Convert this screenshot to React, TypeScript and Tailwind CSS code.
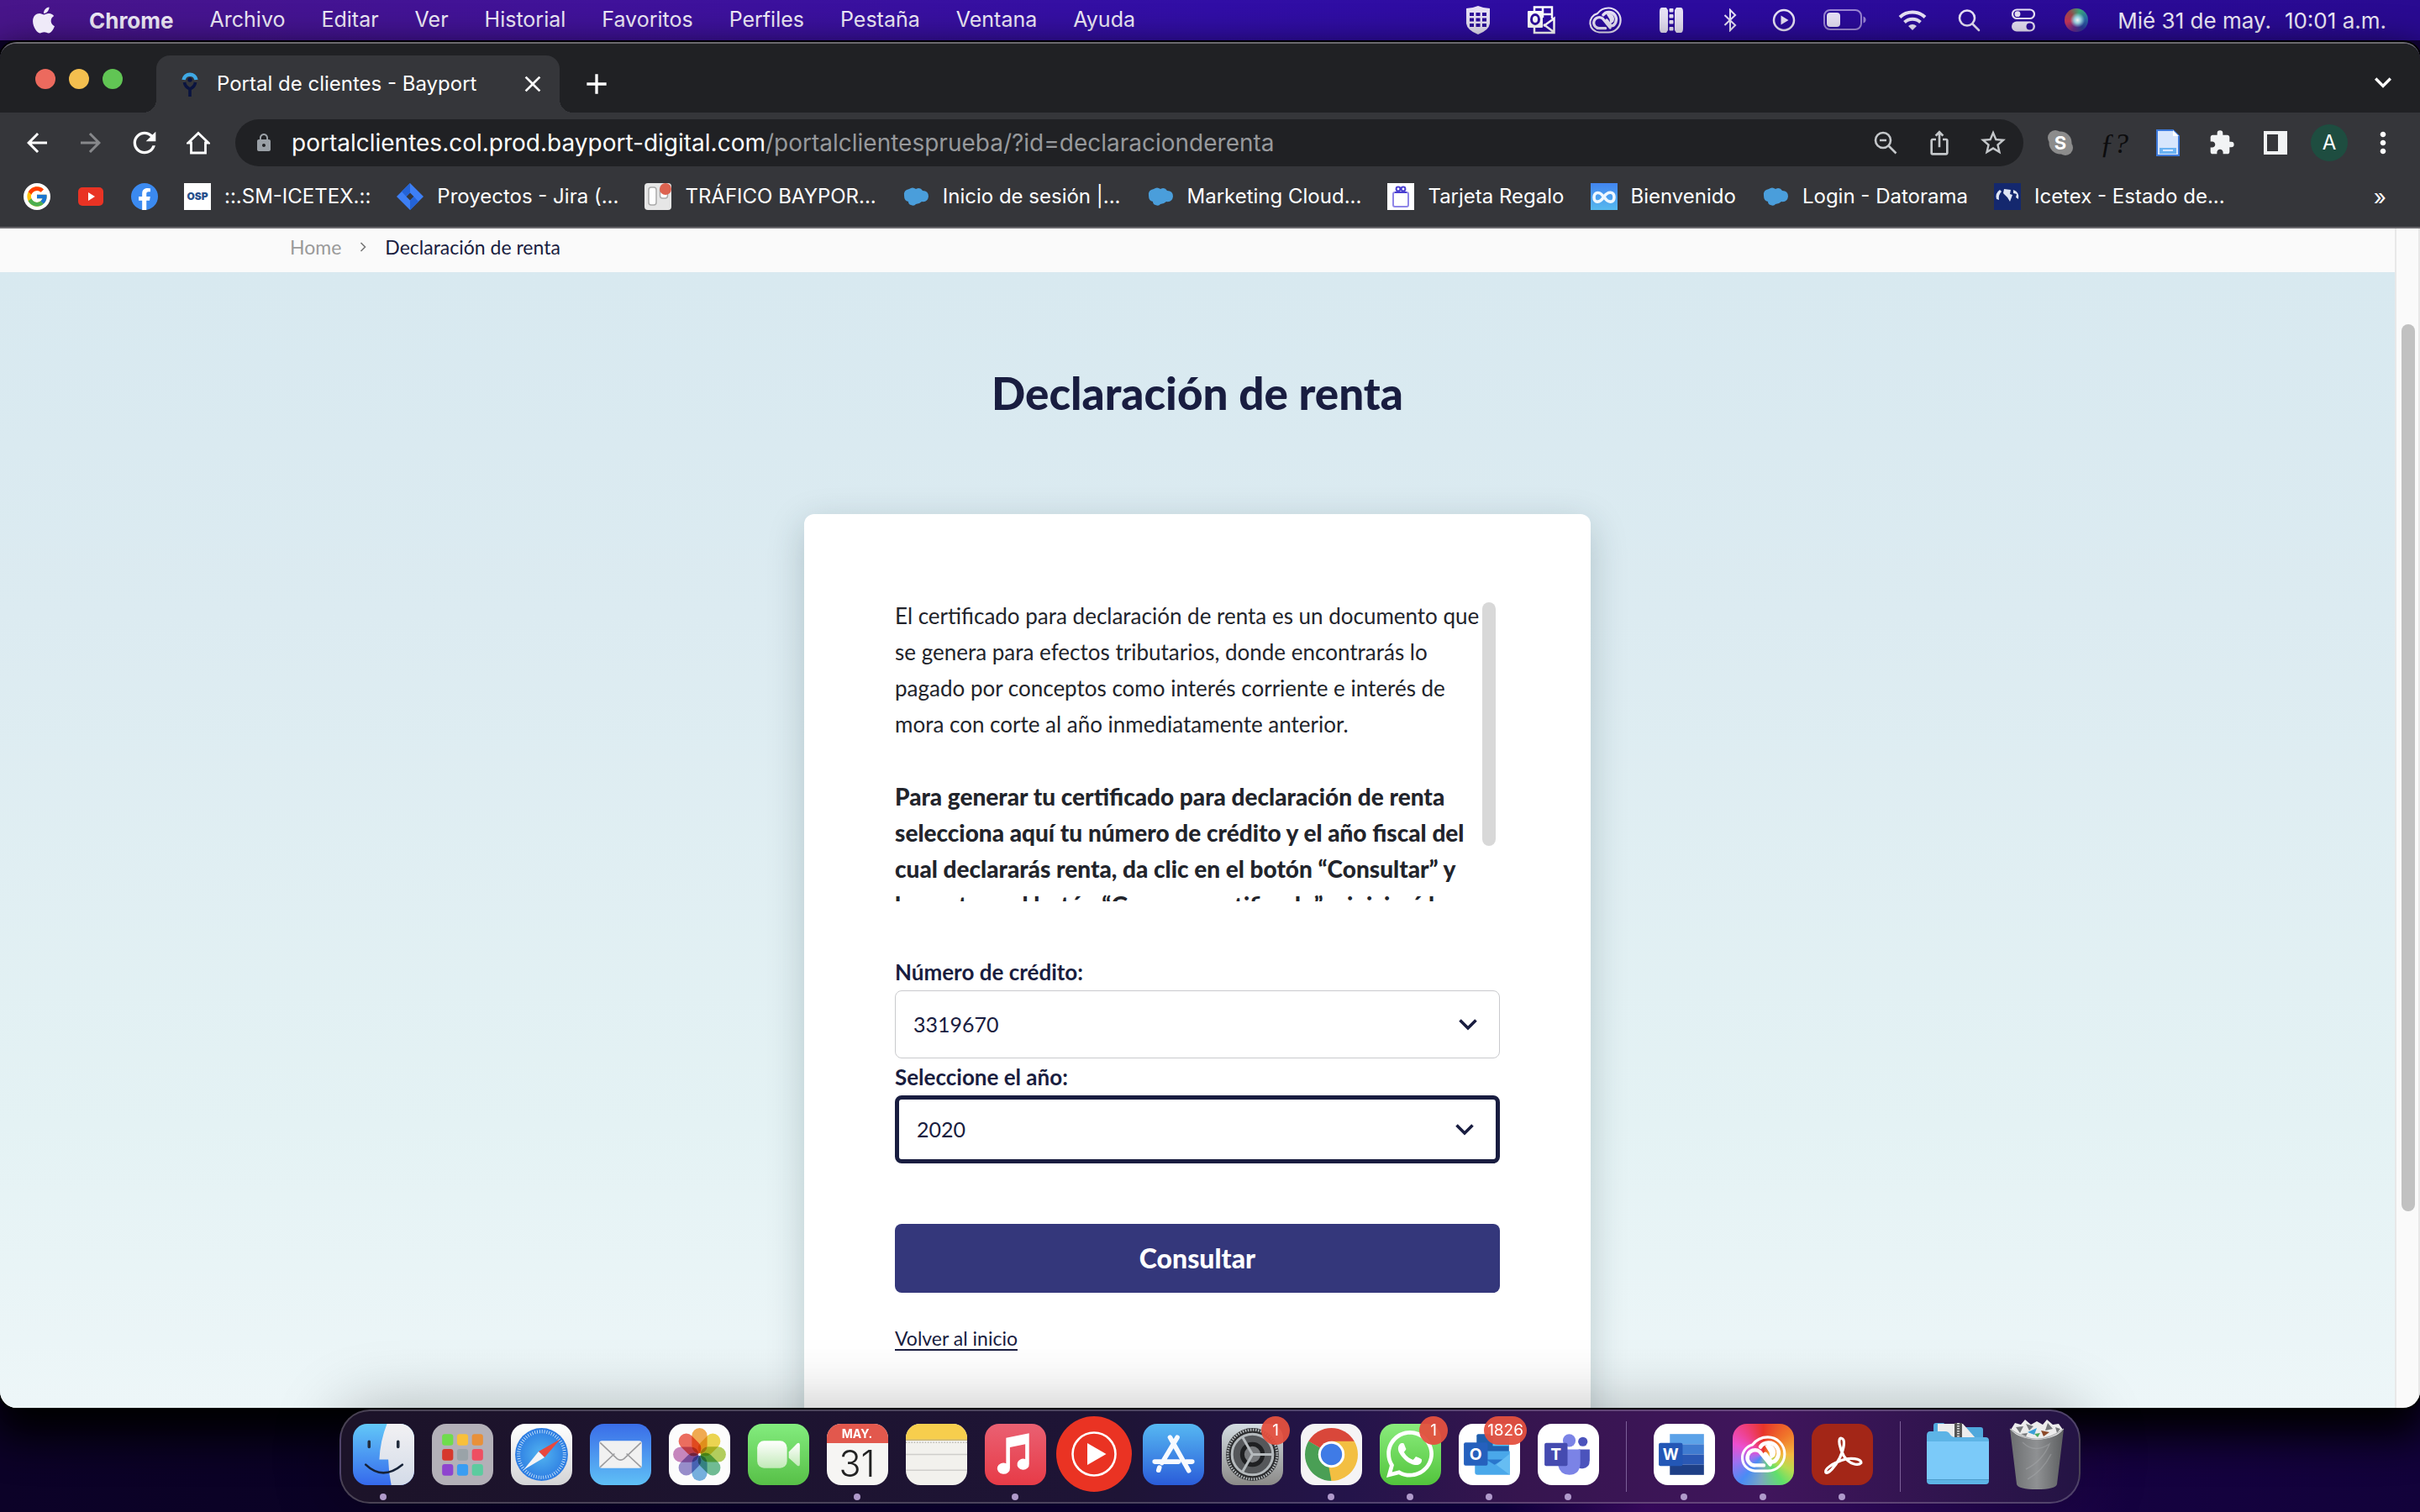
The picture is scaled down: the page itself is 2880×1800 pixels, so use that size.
import React from 'react';
import { FaApple, FaWhatsapp, FaFacebookF } from 'react-icons/fa';
import { FcGoogle } from 'react-icons/fc';
import { MdArrowBack, MdArrowForward, MdRefresh, MdLock, MdIosShare, MdStarBorder, MdExtension, MdMoreVert, MdClose, MdAdd, MdKeyboardArrowDown } from 'react-icons/md';

/* ---------- menu bar ---------- */

const menus = ['Archivo', 'Editar', 'Ver', 'Historial', 'Favoritos', 'Perfiles', 'Pestaña', 'Ventana', 'Ayuda'];

function CloudLoops({ className }: { className?: string }) {
  return (
    <svg viewBox="8 12 58 48" className={className} fill="none" stroke="currentColor" strokeLinecap="round" strokeLinejoin="round">
      <path d="M27 57 A16.500 16.500 0 0 1 24 24.500 C29 18 36 15 43 15 A21 21 0 0 1 43 57 Z" strokeWidth="3.200" />
      <path d="M38 50 H28 A9.500 9.500 0 1 1 33 33 L46 49" strokeWidth="4.600" />
      <path d="M34 27 C38 21 49 20 54 27 C59.500 35 55 45.500 47.500 46 L40 36" strokeWidth="5" />
      <path d="M41 26 C49 23 54 31 51 38 L47 41 L46 34 Z" fill="currentColor" strokeWidth="2" />
    </svg>
  );
}

const statusIcons: { name: string; cell: string; icon: React.ReactNode }[] = [
  {
    name: 'Escudo', cell: 'w-[78px]',
    icon: (
      <svg viewBox="0 0 30 36" className="h-[36px] w-[30px]">
        <path d="M1 4 Q8 4 15 1 Q22 4 29 4 V22 Q28 30 15 35 Q2 30 1 22 Z" fill="#e8e2f6" />
        {[9, 15.5, 22].map((y) => [5, 12.5, 20].map((x) => <rect key={`${x}-${y}`} x={x} y={y} width="5" height="4" fill="#2d0b9b" />))}
      </svg>
    ),
  },
  {
    name: 'Outlook', cell: 'w-[72px]',
    icon: (
      <svg viewBox="0 0 34 34" className="size-[34px]">
        <path d="M9 7 V1.500 H30 V15 M9 26 V32 H32.500 V15 L20 24 M19 2 V14 M19 10 H30 M20 22 L32 31" fill="none" stroke="#fff" strokeWidth="2.500" />
        <rect x="1" y="6" width="18" height="20" rx="1" fill="#fff" />
        <ellipse cx="10" cy="16" rx="4.500" ry="5.500" fill="none" stroke="#2d0b9b" strokeWidth="3" />
      </svg>
    ),
  },
  { name: 'Creative Cloud', cell: 'w-[80px]', icon: <CloudLoops className="h-[34px] w-[40px]" /> },
  {
    name: 'Compresor', cell: 'w-[78px]',
    icon: (
      <svg viewBox="0 0 30 32" className="h-[32px] w-[30px]">
        <path d="M4 1 H9 L11 4 V28 L9 31 H4 Q1 31 1 26 V6 Q1 1 4 1 Z M26 1 H21 L19 4 V28 L21 31 H26 Q29 31 29 26 V6 Q29 1 26 1 Z" fill="#e8e2f6" />
        {[2, 9, 16, 24].map((y) => <rect key={y} x="12.500" y={y} width="5" height="4.500" rx="1" fill="#e8e2f6" />)}
      </svg>
    ),
  },
  { name: 'Bluetooth', cell: 'w-[62px]', icon: <svg viewBox="0 0 20 30" className="h-[28px] w-[20px]" fill="none" stroke="#e8e2f6" strokeWidth="2.200"><path d="M3 8.500 L16.500 21.500 L10 28 V2 L16.500 8.500 L3 21.500" /></svg> },
  {
    name: 'Reproducir', cell: 'w-[66px]',
    icon: (
      <svg viewBox="0 0 28 28" className="size-[28px]">
        <circle cx="14" cy="14" r="12" fill="none" stroke="#e8e2f6" strokeWidth="2.500" />
        <path d="M10.500 8.500 V19.500 L19.500 14 Z" fill="#e8e2f6" />
      </svg>
    ),
  },
  {
    name: 'Batería', cell: 'w-[80px]',
    icon: (
      <svg viewBox="0 0 52 26" className="h-[26px] w-[52px]">
        <rect x="1" y="1" width="44" height="23" rx="7" fill="none" stroke="#9a85d4" strokeWidth="2" />
        <rect x="4" y="4" width="16" height="17" rx="4" fill="#e8e2f6" />
        <path d="M47.500 8.500 Q50.500 9.500 50.500 12.500 Q50.500 15.500 47.500 16.500 Z" fill="#9a85d4" />
      </svg>
    ),
  },
  {
    name: 'Wi-Fi', cell: 'w-[80px]',
    icon: (
      <svg viewBox="0 0 34 26" className="h-[26px] w-[34px]" fill="none" stroke="#e8e2f6" strokeWidth="4">
        <path d="M2 9.500 A22 22 0 0 1 32 9.500" />
        <path d="M7.500 15.500 A14 14 0 0 1 26.500 15.500" />
        <path d="M17 25 L12 20 A7.500 7.500 0 0 1 22 20 Z" fill="#e8e2f6" stroke="none" />
      </svg>
    ),
  },
  { name: 'Buscar', cell: 'w-[54px]', icon: <svg viewBox="0 0 28 28" className="size-[28px]" fill="none" stroke="#e8e2f6" strokeWidth="2.600" strokeLinecap="round"><circle cx="12" cy="11.500" r="9" /><path d="M18.500 18.500 L26 26" /></svg> },
  {
    name: 'Centro de control', cell: 'w-[76px]',
    icon: (
      <svg viewBox="0 0 28 28" className="size-[28px]">
        <rect x="1" y="1.500" width="26" height="10.500" rx="5.250" fill="none" stroke="#e8e2f6" strokeWidth="2.200" />
        <circle cx="7" cy="6.700" r="3.400" fill="#e8e2f6" />
        <rect x="0" y="15.500" width="28" height="12" rx="6" fill="#e8e2f6" />
        <circle cx="21.500" cy="21.500" r="4" fill="#2d0b9b" />
      </svg>
    ),
  },
  {
    name: 'Siri', cell: 'w-[50px]',
    icon: <span className="block size-7 rounded-full bg-[radial-gradient(circle_at_55%_50%,#fff_0%,#9fd8e8_18%,transparent_42%),conic-gradient(from_20deg,#3aa57a,#2a6ea8,#2a3a9a,#6a2a8a,#c8365a,#9a4a4a,#3aa57a)]" />,
  },
];

function MenuBar() {
  return (
    <header className="flex h-12 shrink-0 items-center bg-[linear-gradient(90deg,#48158a_0%,#40129a_25%,#310ea6_50%,#2c0b9e_70%,#290a91_100%)] text-[25px] text-[#efeaf8]">
      <button aria-label="Menú Apple" className="ml-[39px] mr-[41px]"><FaApple className="h-8 w-[26px] scale-110" /></button>
      <nav className="flex gap-[43px]">
        <button className="text-[26px] font-bold">Chrome</button>
        {menus.map((m) => <button key={m}>{m}</button>)}
      </nav>
      <div className="ml-auto flex items-center">
        {statusIcons.map((s) => (
          <button key={s.name} aria-label={s.name} className={`flex items-center justify-center text-[#e8e2f6] ${s.cell}`}>{s.icon}</button>
        ))}
      </div>
      <time className="ml-6 mr-10 flex gap-4 text-[26px]"><span>Mié 31 de may.</span><span>10:01 a.m.</span></time>
    </header>
  );
}

/* ---------- browser chrome ---------- */

function TabStrip() {
  return (
    <div className="flex h-[82px] items-end bg-[#202124] text-white">
      <div className="mb-7 ml-[42px] flex gap-4">
        <button aria-label="Cerrar ventana" className="size-6 rounded-full bg-[#ec6a5e]" />
        <button aria-label="Minimizar" className="size-6 rounded-full bg-[#f4bf4f]" />
        <button aria-label="Ampliar" className="size-6 rounded-full bg-[#61c554]" />
      </div>
      <div className="relative ml-10 flex h-[68px] w-[480px] items-center rounded-t-[16px] bg-[#35363a] pl-6 pr-4 before:absolute before:-left-4 before:bottom-0 before:size-4 before:bg-[radial-gradient(circle_at_0_0,transparent_16px,#35363a_16px)] after:absolute after:-right-4 after:bottom-0 after:size-4 after:bg-[radial-gradient(circle_at_100%_0,transparent_16px,#35363a_16px)]">
        <svg viewBox="0 0 32 32" className="size-8" fill="none">
          <path d="M8.500 11 A7.600 7.600 0 0 1 23.500 11" stroke="#3fa9e5" strokeWidth="4.500" />
          <circle cx="16" cy="11" r="2.700" fill="#0a1440" />
          <path d="M9.500 14 Q10 19 16 22 Q22 19 22.500 14 M16 21 V31" stroke="#0a1440" strokeWidth="3.600" />
        </svg>
        <span className="ml-4 text-[24px]">Portal de clientes - Bayport</span>
        <button aria-label="Cerrar pestaña" className="ml-auto"><MdClose className="size-8" /></button>
      </div>
      <button aria-label="Nueva pestaña" className="mb-[14px] ml-6"><MdAdd className="size-10" /></button>
      <button aria-label="Buscar pestañas" className="mb-4 ml-auto mr-6"><MdKeyboardArrowDown className="size-10" /></button>
    </div>
  );
}

const cell = 'flex w-16 items-center justify-center';

function Toolbar() {
  return (
    <div className="flex h-[72px] items-center bg-[#35363a] px-3 text-white">
      <button aria-label="Atrás" className={cell}><MdArrowBack className="size-9" /></button>
      <button aria-label="Adelante" className={`${cell} text-[#87888b]`}><MdArrowForward className="size-9" /></button>
      <button aria-label="Recargar" className={cell}><MdRefresh className="size-10" /></button>
      <button aria-label="Inicio" className={cell}>
        <svg viewBox="0 0 28 28" className="size-7" fill="none" stroke="currentColor" strokeWidth="2.800"><path d="M2 14 L14 2.500 L26 14 H22.500 V26 H5.500 V14 Z" /></svg>
      </button>
      <div className="mx-3 flex h-14 min-w-0 flex-1 items-center rounded-full bg-[#202124] pl-[22px] pr-1 text-[28px]">
        <MdLock className="size-6 shrink-0 text-[#9aa0a6]" />
        <div role="textbox" aria-label="Dirección" className="ml-[21px] flex-1 truncate text-[#97999c]">
          <span className="text-white">portalclientes.col.prod.bayport-digital.com</span>/portalclientesprueba/?id=declaracionderenta
        </div>
        <button aria-label="Reducir" className={`${cell} text-[#c4c7ca]`}>
          <svg viewBox="0 0 28 28" className="size-7" fill="none" stroke="currentColor" strokeWidth="2.600"><circle cx="11" cy="11" r="9" /><path d="M7 11 H15 M17.500 17.500 L26.500 26.500" /></svg>
        </button>
        <button aria-label="Compartir" className={`${cell} text-[#c4c7ca]`}><MdIosShare className="size-8" /></button>
        <button aria-label="Guardar en favoritos" className={`${cell} text-[#c4c7ca]`}><MdStarBorder className="size-9" /></button>
      </div>
      <button aria-label="Skype" className={cell}>
        <svg viewBox="0 0 32 32" className="size-8">
          <circle cx="10" cy="10" r="9" fill="#8c8c8c" /><circle cx="22" cy="22" r="9" fill="#8c8c8c" /><circle cx="16" cy="16" r="13.500" fill="#8c8c8c" />
          <text x="16" y="24" textAnchor="middle" fontSize="22" fontWeight="700" fill="#fff">S</text>
        </svg>
      </button>
      <button aria-label="Tipografía" className={`${cell} font-[family-name:Liberation_Serif,serif] text-[34px] italic text-[#0c0c0d]`}>ƒ?</button>
      <button aria-label="Documentos" className={cell}>
        <svg viewBox="0 0 28 32" className="h-8 w-7">
          <path d="M1 1 H20 L27 8 V31 H1 Z" fill="#d7e6fd" stroke="#3c78d8" strokeWidth="2" />
          <path d="M20 1 L27 8 H20 Z" fill="#fff" />
          <rect x="4" y="22" width="20" height="7" fill="#6ab2f2" />
          <rect x="8" y="24" width="12" height="2" fill="#d7e6fd" />
        </svg>
      </button>
      <button aria-label="Extensiones" className={`${cell} text-[#f1f3f4]`}><MdExtension className="size-8" /></button>
      <button aria-label="Panel lateral" className={cell}>
        <svg viewBox="0 0 28 28" className="size-7"><path fillRule="evenodd" d="M0 0 H28 V28 H0 Z M4 4 V24 H17 V4 Z" fill="#f1f3f4" /></svg>
      </button>
      <button aria-label="Perfil" className={cell}>
        <span className="flex size-11 items-center justify-center rounded-full bg-[#1e4d40] text-[24px]">A</span>
      </button>
      <button aria-label="Más opciones" className={cell}><MdMoreVert className="size-10" /></button>
    </div>
  );
}

function SalesCloud() {
  return (
    <svg viewBox="0 0 32 32" className="size-8 shrink-0">
      <path d="M2 15 Q1 8 8 7 Q12 4 16 7 Q21 4 24 9 Q31 9 31 16 Q30 23 23 22 Q20 25 16 25 Q14 28 10 26 Q7 25 7 22 Q2 21 2 15 Z" fill="#4a9edb" />
    </svg>
  );
}

const bookmarks: { label: string; icon: React.ReactNode }[] = [
  {
    label: '::.SM-ICETEX.::',
    icon: <span className="flex size-8 shrink-0 items-center justify-center bg-white text-[12px] font-black text-[#27508c]">OSP</span>,
  },
  {
    label: 'Proyectos - Jira (...',
    icon: (
      <svg viewBox="0 0 32 32" className="size-8 shrink-0">
        <path d="M16 0 L32 16 L16 32 L0 16 Z M16 11.500 L11.500 16 L16 20.500 L20.500 16 Z" fill="#3d7ff5" fillRule="evenodd" />
        <path d="M16 0 L16 11.500 L11.500 16 L6 10 Z M16 32 L16 20.500 L20.500 16 L26 22 Z" fill="#2463d6" />
      </svg>
    ),
  },
  {
    label: 'TRÁFICO BAYPOR...',
    icon: (
      <svg viewBox="0 0 32 32" className="size-8 shrink-0">
        <rect width="32" height="32" rx="4" fill="#e6e6e6" />
        <rect x="5" y="5" width="9" height="21" rx="3" fill="#fff" stroke="#aaa" strokeWidth="1.500" />
        <rect x="18.500" y="5" width="9" height="13" rx="3" fill="#fff" stroke="#aaa" strokeWidth="1.500" />
        <circle cx="25" cy="7" r="7" fill="#dd6350" />
      </svg>
    ),
  },
  { label: 'Inicio de sesión |...', icon: <SalesCloud /> },
  { label: 'Marketing Cloud...', icon: <SalesCloud /> },
  {
    label: 'Tarjeta Regalo',
    icon: (
      <svg viewBox="0 0 32 32" className="size-8 shrink-0">
        <rect width="32" height="32" fill="#fff" />
        <rect x="7" y="11" width="18" height="17" rx="2" fill="#fff" stroke="#8f86e8" strokeWidth="2" />
        <path d="M9 10 H23 V12 H9 Z" fill="#4a3fd0" />
        <circle cx="13" cy="7" r="2.400" fill="none" stroke="#4a3fd0" strokeWidth="2" />
        <circle cx="19" cy="7" r="2.400" fill="none" stroke="#4a3fd0" strokeWidth="2" />
      </svg>
    ),
  },
  {
    label: 'Bienvenido',
    icon: (
      <svg viewBox="0 0 32 32" className="size-8 shrink-0">
        <defs><linearGradient id="bv" x2="0" y2="1"><stop stopColor="#4285f0" /><stop offset="1" stopColor="#56b9ee" /></linearGradient></defs>
        <rect width="32" height="32" fill="url(#bv)" />
        <path d="M16 18 C12 9 4 10 4 17 C4 24 11 24 16 16 C21 9 28 10 28 17 C28 24 20 24 16 16" fill="none" stroke="#eef7ff" strokeWidth="3.600" />
      </svg>
    ),
  },
  { label: 'Login - Datorama', icon: <SalesCloud /> },
  {
    label: 'Icetex - Estado de...',
    icon: (
      <svg viewBox="0 0 32 32" className="size-8 shrink-0">
        <rect width="32" height="32" fill="#14286e" />
        <path d="M3 19 Q1 12 7 8 L9 10 Q5 14 6 20 Z M12 7 L20 8 L19 13 L22 14 L19 22 L16 17 L11 12 Z M23 8 Q31 11 29 19 L26 17 L27 13 L23 12 Z" fill="#dfe6f4" />
      </svg>
    ),
  },
];

function BookmarksBar() {
  return (
    <nav className="flex h-[66px] items-center gap-[31px] border-b-2 border-[#6a696d] bg-[#35363a] pb-2 pl-[28px] pr-10 text-[24px] text-white">
      <div className="flex gap-8">
        <a href="#google" aria-label="Google" className="flex size-8 shrink-0 items-center justify-center rounded-full bg-white"><FcGoogle className="size-7" /></a>
        <a href="#youtube" aria-label="YouTube" className="flex size-8 shrink-0 items-center justify-center">
          <svg viewBox="0 0 30 22" className="h-[22px] w-[30px]"><rect width="30" height="22" rx="5" fill="#e93324" /><path d="M12 6 V16 L20 11 Z" fill="#fff" /></svg>
        </a>
        <a href="#facebook" aria-label="Facebook" className="flex size-8 shrink-0 items-end justify-center rounded-full bg-[#3b8af0] text-white"><FaFacebookF className="h-[26px] w-5" /></a>
      </div>
      {bookmarks.map((b) => (
        <a key={b.label} href="#marcador" className="flex items-center gap-4 whitespace-nowrap">{b.icon}{b.label}</a>
      ))}
      <button aria-label="Más marcadores" className="ml-auto text-[26px]">»</button>
    </nav>
  );
}

/* ---------- page ---------- */

function SelectField({ id, label, value, focused }: { id: string; label: string; value: string; focused?: boolean }) {
  return (
    <div>
      <label htmlFor={id} className="block text-[26px] font-bold leading-[44px] text-[#191d40]">{label}</label>
      <div className="relative">
        <select
          id={id}
          defaultValue={value}
          className={`h-[81px] w-full appearance-none rounded-lg bg-white pl-[21px] text-[25px] text-[#191d40] outline-none ${focused ? 'border-[5px] border-[#191d40]' : 'border border-[#c9cacd]'}`}
        >
          <option>{value}</option>
        </select>
        <svg viewBox="0 0 22 14" className={`pointer-events-none absolute top-[34px] h-[14px] w-[22px] ${focused ? 'right-[31px]' : 'right-[27px]'}`} fill="none" stroke="#191d40" strokeWidth="3.600">
          <path d="M1.500 1.500 L11 11 L20.500 1.500" />
        </svg>
      </div>
    </div>
  );
}

function Portal() {
  return (
    <div className="flex min-h-0 flex-1 overflow-hidden rounded-b-[20px] bg-[#fafafa] font-[family-name:Lato,sans-serif]">
      <div className="flex min-w-0 flex-1 flex-col">
        <nav aria-label="Ruta" className="flex h-[52px] shrink-0 items-center gap-[22px] pb-2 pl-[345px] text-[23px] text-[#191d40]">
          <a href="#home" className="text-[#9a9a9a]">Home</a>
          <svg viewBox="0 0 8 12" className="h-3 w-2" fill="none" stroke="#777" strokeWidth="1.600"><path d="M1.500 1 L6.500 6 L1.500 11" /></svg>
          <span>Declaración de renta</span>
        </nav>
        <main className="flex min-h-0 flex-1 flex-col items-center overflow-hidden bg-[linear-gradient(180deg,#d8e9f0_0%,#dcebf1_30%,#e4f2f4_75%,#edf6f8_100%)]">
          <h1 className="mt-[112px] text-[53px] font-black leading-[64px] text-[#191d40]">Declaración de renta</h1>
          <section className="mt-[112px] w-[936px] shrink-0 rounded-xl bg-white px-[108px] pb-32 pt-[100px] shadow-[0_12px_44px_rgba(20,50,60,0.22)]">
            <div className="flex h-[361px] overflow-hidden">
              <div className="min-w-0 flex-1 text-[26px] leading-[43px] text-[#22242b]">
                <p>El certificado para declaración de renta es un documento que se genera para efectos tributarios, donde encontrarás lo pagado por conceptos como interés corriente e interés de mora con corte al año inmediatamente anterior.</p>
                <p className="mt-[43px] text-[28px] font-black">Para generar tu certificado para declaración de renta selecciona aquí tu número de crédito y el año fiscal del cual declararás renta, da clic en el botón “Consultar” y luego toca el botón “Generar certificado” e iniciará la descarga.</p>
              </div>
              <div className="mr-[5px] mt-[5px] h-[290px] w-4 shrink-0 rounded-full bg-[#d8d8d8]" />
            </div>
            <form className="mt-[62px]" onSubmit={(e) => e.preventDefault()}>
              <SelectField id="credito" label="Número de crédito:" value="3319670" />
              <SelectField id="anio" label="Seleccione el año:" value="2020" focused />
              <button type="submit" className="mt-[72px] h-[82px] w-full rounded-lg bg-[#34377b] text-[32px] font-black text-white">Consultar</button>
            </form>
            <a href="#inicio" className="mt-9 inline-block text-[23px] leading-9 text-[#191d40] underline decoration-2 underline-offset-4">Volver al inicio</a>
          </section>
        </main>
      </div>
      <div className="w-[30px] shrink-0 border-l-2 border-r-2 border-[#e8e8e8] pl-1.5 pt-[114px]">
        <div className="h-[1056px] w-4 rounded-full bg-[#c1c1c1]" />
      </div>
    </div>
  );
}

/* ---------- dock ---------- */

const tile = 'h-[73px] w-[73px] shrink-0 overflow-hidden rounded-[17px]';

const FinderIcon = (
  <svg viewBox="0 0 72 72" className={tile}>
    <defs>
      <linearGradient id="fi" x2="0" y2="1"><stop stopColor="#62c8f8" /><stop offset="1" stopColor="#3569ec" /></linearGradient>
      <linearGradient id="fj" x2="0" y2="1"><stop stopColor="#f2f1f3" /><stop offset="1" stopColor="#d3dbe8" /></linearGradient>
    </defs>
    <rect width="72" height="72" fill="url(#fi)" />
    <path d="M40 0 Q32 20 31 42 H41.500 Q42 58 45 72 H72 V0 Z" fill="url(#fj)" />
    <path d="M19 21 V27 M53 21 V27" stroke="#222d3d" strokeWidth="3.500" strokeLinecap="round" />
    <path d="M15 48 Q35 67 58 48" fill="none" stroke="#162238" strokeWidth="2.600" strokeLinecap="round" />
  </svg>
);

const launchColors = ['#6fdc4c', '#f8c03a', '#e8903a', '#d6382c', '#9aa3a8', '#ee4f62', '#8e44cf', '#3a9df2', '#5ccb9f'];
const LaunchpadIcon = (
  <svg viewBox="0 0 72 72" className={tile}>
    <rect width="72" height="72" fill="#b3b0b8" />
    {launchColors.map((c, i) => <rect key={c} x={12 + (i % 3) * 17.5} y={12 + Math.floor(i / 3) * 17.7} width="13" height="13.500" rx="3" fill={c} />)}
  </svg>
);

const SafariIcon = (
  <svg viewBox="0 0 72 72" className={tile}>
    <defs>
      <linearGradient id="sa" x2="0" y2="1"><stop stopColor="#fff" /><stop offset="1" stopColor="#d4d4d6" /></linearGradient>
      <radialGradient id="sb"><stop stopColor="#52b4f0" /><stop offset="1" stopColor="#2c7be2" /></radialGradient>
    </defs>
    <rect width="72" height="72" fill="url(#sa)" />
    <circle cx="36" cy="36" r="31" fill="url(#sb)" />
    <circle cx="36" cy="36" r="27" fill="none" stroke="#d8ecfb" strokeWidth="4" strokeDasharray="0.8 2.030" />
    <path d="M58 18 L32.500 32.500 L39.500 39.500 Z" fill="#e8483e" />
    <path d="M15 54 L32.500 32.500 L39.500 39.500 Z" fill="#f4f4f6" />
  </svg>
);

const MailIcon = (
  <svg viewBox="0 0 72 72" className={tile}>
    <defs><linearGradient id="ma" x2="0" y2="1"><stop stopColor="#3a6de8" /><stop offset="1" stopColor="#5fc0f6" /></linearGradient></defs>
    <rect width="72" height="72" fill="url(#ma)" />
    <rect x="11" y="20" width="50" height="32" rx="3" fill="#f1f1f1" />
    <path d="M12 51 L29 35 M60 51 L43 35 M12 22 L32 41 Q36 44 40 41 L60 22" fill="none" stroke="#9c9c9e" strokeWidth="1.600" />
  </svg>
);

const petals = ['#f2a13a', '#ecd23a', '#aaca48', '#5db486', '#64a6dc', '#8b7fc6', '#c277b6', '#ec5a4a'];
const PhotosIcon = (
  <svg viewBox="0 0 72 72" className={tile}>
    <rect width="72" height="72" fill="#fcfcfc" />
    <g className="mix-blend-multiply">
      {petals.map((c, i) => <rect key={c} x="27" y="5" width="18" height="30" rx="9" fill={c} opacity="0.880" transform={`rotate(${i * 45} 36 36)`} className="mix-blend-multiply" />)}
    </g>
    <circle cx="36" cy="36" r="1.500" fill="#fff" />
  </svg>
);

const FaceTimeIcon = (
  <svg viewBox="0 0 72 72" className={tile}>
    <defs>
      <linearGradient id="ft" x2="0" y2="1"><stop stopColor="#83ec7e" /><stop offset="1" stopColor="#57c047" /></linearGradient>
      <linearGradient id="fu" x2="0" y2="1"><stop stopColor="#fff" /><stop offset="1" stopColor="#c2eab8" /></linearGradient>
    </defs>
    <rect width="72" height="72" fill="url(#ft)" />
    <rect x="11" y="20" width="35" height="32" rx="8" fill="url(#fu)" />
    <path d="M48 33 L58 23 Q61 21 61 25 V47 Q61 51 58 49 L48 40 Z" fill="url(#fu)" />
  </svg>
);

const CalendarIcon = (
  <span className={`${tile} flex flex-col items-center bg-[#f6f5f3]`}>
    <span className="flex h-[23px] w-full items-center justify-center bg-[#e2584d] text-[14px] font-bold text-white">MAY.</span>
    <span className="text-[43px] font-light leading-[48px] text-[#222]">31</span>
  </span>
);

const NotesIcon = (
  <svg viewBox="0 0 72 72" className={tile}>
    <rect width="72" height="72" fill="#f2f1ed" />
    <rect width="72" height="18.500" fill="#f7ce4d" />
    <path d="M0 19 H72" stroke="#b59a45" strokeWidth="1" />
    <path d="M0 22 H72" stroke="#b9b8b4" strokeWidth="1.400" strokeDasharray="1.400 1.800" />
    <path d="M0 36 H72 M0 54.500 H72" stroke="#cfcecb" strokeWidth="1.400" />
  </svg>
);

const MusicIcon = (
  <svg viewBox="0 0 72 72" className={tile}>
    <defs><linearGradient id="mu" x2="0" y2="1"><stop stopColor="#ea6072" /><stop offset="1" stopColor="#e73b47" /></linearGradient></defs>
    <rect width="72" height="72" fill="url(#mu)" />
    <path d="M25 16.500 L52 11 V47 A7 6.500 0 1 1 47.500 41.500 V24 L29.500 27.500 V52 A7.500 6.500 0 1 1 25 46.500 Z" fill="#fff" />
  </svg>
);

const PlayIcon = (
  <svg viewBox="0 0 90 90" className="size-[90px] shrink-0">
    <circle cx="45" cy="45" r="45" fill="#ea3323" />
    <circle cx="45" cy="45" r="25.500" fill="none" stroke="#fff" strokeWidth="2.600" />
    <path d="M37 32 V58 L59.500 45 Z" fill="#fff" />
  </svg>
);

const AppStoreIcon = (
  <svg viewBox="0 0 72 72" className={tile}>
    <defs><linearGradient id="as" x2="0" y2="1"><stop stopColor="#56b8f2" /><stop offset="1" stopColor="#2a5cd9" /></linearGradient></defs>
    <rect width="72" height="72" fill="url(#as)" />
    <g stroke="#f7faff" strokeWidth="5.500" strokeLinecap="round">
      <path d="M40.500 16 L22.500 46 M19.500 51.500 L18.500 54.500 M32 16 L54 55 M14 44.500 H42 M51 44.500 H58" />
    </g>
  </svg>
);

const SettingsIcon = (
  <svg viewBox="0 0 72 72" className={tile}>
    <defs><linearGradient id="se" x2="0" y2="1"><stop stopColor="#d3dce2" /><stop offset="1" stopColor="#8b8a88" /></linearGradient></defs>
    <rect width="72" height="72" fill="url(#se)" />
    <circle cx="36" cy="36" r="31" fill="#2b2c2e" />
    <circle cx="36" cy="36" r="29" fill="none" stroke="#b5babd" strokeWidth="3" strokeDasharray="1.600 1.440" />
    <circle cx="36" cy="36" r="24" fill="#55575a" stroke="#b5babd" strokeWidth="3" />
    <circle cx="36" cy="36" r="12" fill="#77797c" stroke="#1f2022" strokeWidth="5" />
    <path d="M36 36 H60 M36 36 L24 15 M36 36 L24 57" stroke="#b5babd" strokeWidth="3" />
  </svg>
);

const ChromeIcon = (
  <svg viewBox="0 0 72 72" className={tile}>
    <rect width="72" height="72" fill="#f5f4f5" />
    <path d="M36 36 L9.100 20.500 A31 31 0 0 1 62.900 20.500 Z" fill="#d9473a" />
    <path d="M36 36 L62.900 20.500 A31 31 0 0 1 36 67 Z" fill="#f3bf42" />
    <path d="M36 36 L36 67 A31 31 0 0 1 9.100 20.500 Z" fill="#4a9f55" />
    <path d="M36 20.500 H62.900 L49 30 Z" fill="#f3bf42" />
    <path d="M22.600 43.700 L9.100 20.500 L25 30 Z" fill="#4a9f55" />
    <path d="M49.400 43.700 L36 67 L33 51 Z" fill="#f3bf42" />
    <circle cx="36" cy="36" r="15.500" fill="#fff" />
    <circle cx="36" cy="36" r="12.500" fill="#3f7be6" />
  </svg>
);

const WhatsIcon = (
  <span className={`${tile} flex items-center justify-center bg-[linear-gradient(180deg,#8aec7c,#52c43c)] text-white`}><FaWhatsapp className="size-16" /></span>
);

const OutlookIcon = (
  <svg viewBox="0 0 72 72" className={tile}>
    <rect width="72" height="72" fill="#fff" />
    <rect x="21" y="12" width="38" height="40" rx="2" fill="#1f5fae" />
    <rect x="40" y="12" width="19" height="14" fill="#57c1f3" />
    <path d="M19 32 H60 V60 H22 Q19 60 19 57 Z" fill="#4aa8ea" />
    <path d="M32 42 H52 L42 48 Z" fill="#2a76cc" />
    <path d="M60 35 L44 48 L60 60 Z" fill="#66bdf3" />
    <rect x="6" y="22" width="28" height="27" rx="2" fill="#2560bd" />
    <text x="20" y="42" textAnchor="middle" fontSize="19" fontWeight="700" fill="#fff">O</text>
  </svg>
);

const TeamsIcon = (
  <svg viewBox="0 0 72 72" className={tile}>
    <rect width="72" height="72" fill="#fff" />
    <circle cx="53" cy="21" r="5.500" fill="#4b53bc" />
    <circle cx="37" cy="19.500" r="7.500" fill="#7b83e6" />
    <path d="M48 30 H61 V43 Q61 52 53 52.500 Q48 52.500 47 50 Z" fill="#4b53bc" />
    <path d="M24 30 H50 V47 Q49 59.500 37 60 Q26 59.500 24 49 Z" fill="#7b83e6" />
    <rect x="8" y="22.500" width="27" height="27" rx="2" fill="#454bb0" />
    <text x="21.500" y="42.500" textAnchor="middle" fontSize="19" fontWeight="700" fill="#fff">T</text>
  </svg>
);

const WordIcon = (
  <svg viewBox="0 0 72 72" className={tile}>
    <rect width="72" height="72" fill="#fff" />
    <rect x="19" y="12" width="40" height="12" fill="#5ba2e8" />
    <rect x="19" y="24" width="40" height="12" fill="#3f7bd0" />
    <rect x="19" y="36" width="40" height="12" fill="#2a58b4" />
    <rect x="19" y="48" width="40" height="12" fill="#1e3f86" />
    <rect x="6" y="22.500" width="28" height="27" rx="2" fill="#2357b6" />
    <text x="20" y="42.500" textAnchor="middle" fontSize="18" fontWeight="700" fill="#fff">W</text>
  </svg>
);

const CreativeIcon = (
  <span className={`${tile} flex items-center justify-center bg-[conic-gradient(from_0deg,#e8352a,#f0752a_50deg,#f3b840_90deg,#b8dc50_120deg,#5fe06a_145deg,#7aa8c0_185deg,#4a8cf5_220deg,#a070f0_255deg,#ec4fd0_290deg,#ee3f80_325deg,#e8352a)] text-white`}>
    <CloudLoops className="h-[46px] w-[56px]" />
  </span>
);

const AcrobatIcon = (
  <svg viewBox="0 0 72 72" className={tile}>
    <rect width="72" height="72" fill="#a32617" />
    <path d="M35 17 C30 16 33 30 38 38 C44 47 54 50 58 46 C59 41 45 39 35 43 C24 47 15 53 16.500 57 C19 60 28 50 33 40 C38 30 40 18 35 17 Z" fill="none" stroke="#fff" strokeWidth="3.200" strokeLinejoin="round" />
  </svg>
);

const FolderIcon = (
  <svg viewBox="0 0 74 74" className="h-[74px] w-[74px] shrink-0">
    <path d="M8 3 Q8 0 11 0 H20 L26 5 H64 Q67 5 67 8 V20 H8 Z" fill="#4fa8dc" />
    <path d="M13 1 H43 L58 18 H13 Z" fill="#ececec" />
    <path d="M33 0 H42 V18 H33 Z" fill="#555" />
    <path d="M37.500 0 V18" stroke="#ddd" strokeWidth="3" strokeDasharray="1.500 1.500" />
    <path d="M0 15 Q0 10 4 10 H22 Q26 10 28 14 Q30 17 34 17 H70 Q74 17 74 21 V69 Q74 73 70 73 H4 Q0 73 0 69 Z" fill="#5db4e6" />
    <path d="M0 22 H74 V67 H0 Z" fill="#7bcaf9" />
    <path d="M0 67.500 H74" stroke="#4d9dcc" strokeWidth="1" />
  </svg>
);

const TrashIcon = (
  <svg viewBox="0 0 66 84" className="h-[84px] w-[66px] shrink-0">
    <defs>
      <linearGradient id="tr"><stop stopColor="#6c6e70" /><stop offset="0.500" stopColor="#8f9193" /><stop offset="1" stopColor="#5c5e60" /></linearGradient>
    </defs>
    <path d="M1 12 Q33 28 65 12 L57 78 Q55 84 33 84 Q11 84 9 78 Z" fill="url(#tr)" />
    <path d="M2 13 L7 5 L14 7 L19 1 L26 7 L33 3 L40 7 L45 1 L52 7 L59 6 L64 13 Q57 23 33 25 Q10 23 2 13 Z" fill="#ececec" />
    <path d="M8 10 L13 17 L17 9 Z M20 6 L24 14 L29 9 Z M46 5 L43 14 L52 12 Z M55 10 L57 17 L61 12 Z M14 18 L20 21 L22 17 Z" fill="#77797c" />
    <path d="M22 16 L33 11 L30 19 Z" fill="#3a9fd8" />
    <path d="M38 14 L48 16 L41 21 Z" fill="#8c4a2a" />
    <path d="M30 18 L37 17 L34 22 Z" fill="#4aa860" />
    <path d="M1 12 Q33 36 65 12" fill="none" stroke="#b0b2b4" strokeWidth="1.200" />
    <path d="M16 28 Q30 42 48 30 Q40 50 20 60 M22 72 Q40 62 50 42" fill="none" stroke="#a9abad" strokeWidth="1.500" opacity="0.450" />
  </svg>
);

type DockItem = { name: string; icon: React.ReactNode; open?: boolean; badge?: string };

const apps: DockItem[] = [
  { name: 'Finder', icon: FinderIcon, open: true },
  { name: 'Launchpad', icon: LaunchpadIcon },
  { name: 'Safari', icon: SafariIcon },
  { name: 'Mail', icon: MailIcon },
  { name: 'Fotos', icon: PhotosIcon },
  { name: 'FaceTime', icon: FaceTimeIcon },
  { name: 'Calendario', icon: CalendarIcon, open: true },
  { name: 'Notas', icon: NotesIcon },
  { name: 'Música', icon: MusicIcon, open: true },
  { name: 'YouTube Music', icon: PlayIcon },
  { name: 'App Store', icon: AppStoreIcon },
  { name: 'Ajustes', icon: SettingsIcon, badge: '1' },
  { name: 'Chrome', icon: ChromeIcon, open: true },
  { name: 'WhatsApp', icon: WhatsIcon, open: true, badge: '1' },
  { name: 'Outlook', icon: OutlookIcon, open: true, badge: '1826' },
  { name: 'Teams', icon: TeamsIcon, open: true },
];
const recents: DockItem[] = [
  { name: 'Word', icon: WordIcon, open: true },
  { name: 'Creative Cloud', icon: CreativeIcon, open: true },
  { name: 'Acrobat', icon: AcrobatIcon, open: true },
];
const places: DockItem[] = [
  { name: 'Descargas', icon: FolderIcon },
  { name: 'Papelera', icon: TrashIcon },
];

function DockButton({ item }: { item: DockItem }) {
  return (
    <button aria-label={item.name} className="relative flex h-full w-[94px] shrink-0 flex-col items-center">
      <span className="flex h-[102px] items-center justify-center">{item.icon}</span>
      {item.open && <span className="-mt-1 size-2 rounded-full bg-[#b09acb]" />}
      {item.badge && (
        <span className="absolute right-0.5 top-1.5 flex h-[34px] min-w-[34px] items-center justify-center rounded-full bg-[#e4503f]/95 px-1 text-[19px] text-white">{item.badge}</span>
      )}
    </button>
  );
}

function Divider() {
  return <div className="flex w-11 shrink-0 items-center justify-center"><div className="h-[84px] w-px bg-[#7c5f98]" /></div>;
}

function Dock() {
  return (
    <footer className="relative z-10 flex h-[124px] shrink-0 items-start justify-center pt-0.5">
      <div className="flex h-[112px] rounded-[36px] border-2 border-white/20 bg-[linear-gradient(90deg,#1c1329_0%,#1e1436_45%,#24144a_58%,#36154f_68%,#40155c_82%,#241444_100%)] px-[3px] shadow-[0_0_80px_rgba(0,0,0,0.28)]">
        {apps.map((a) => <DockButton key={a.name} item={a} />)}
        <Divider />
        {recents.map((a) => <DockButton key={a.name} item={a} />)}
        <Divider />
        {places.map((a) => <DockButton key={a.name} item={a} />)}
      </div>
    </footer>
  );
}

export default function App() {
  return (
    <div className="flex h-screen flex-col overflow-hidden bg-[linear-gradient(90deg,#0c0228_0%,#0a0224_18%,#0c0032_45%,#110042_62%,#3d0a66_68%,#330a60_76%,#150240_88%,#12023a_100%)] font-[family-name:Inter,sans-serif]">
      <MenuBar />
      <div className="mt-0.5 flex min-h-0 flex-1 flex-col rounded-[20px] shadow-[0_0_0_2px_#000,0_24px_50px_10px_#000]">
        <div className="overflow-hidden rounded-t-[20px] border-t-2 border-[#6a696d]">
          <TabStrip />
          <Toolbar />
          <BookmarksBar />
        </div>
        <Portal />
      </div>
      <Dock />
    </div>
  );
}
